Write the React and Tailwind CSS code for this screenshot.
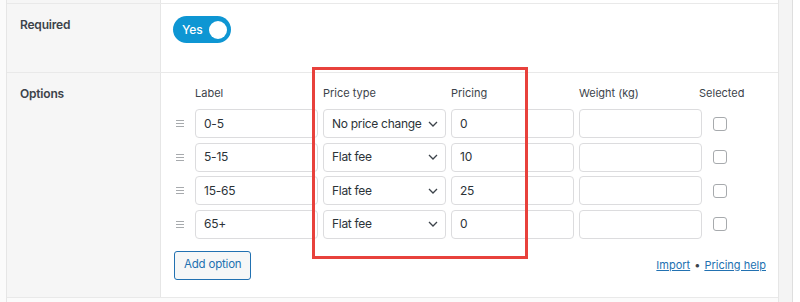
import React from "react";

const rows = [
  { label: "0-5", type: "No price change", price: "0" },
  { label: "5-15", type: "Flat fee", price: "10" },
  { label: "15-65", type: "Flat fee", price: "25" },
  { label: "65+", type: "Flat fee", price: "0" },
];

const Handle = () => (
  <svg width="8" height="7" viewBox="0 0 8 7" className="ml-[2px]">
    <path d="M0 0.5H8M0 3.5H8M0 6.5H8" stroke="#a7aaad" strokeWidth="1" />
  </svg>
);

const Chevron = () => (
  <svg width="10" height="6" viewBox="0 0 10 6" className="shrink-0">
    <path d="M1 1L5 5L9 1" fill="none" stroke="#3c434a" strokeWidth="1.3" />
  </svg>
);

const Field = ({ value }) => (
  <div className="h-[29px] rounded-[4px] border border-[#dcdcde] bg-white pl-[8px] flex items-center text-[12px] tracking-[-0.2px] text-[#2c3338]">
    {value}
  </div>
);

const headCls = "text-[11px] text-[#3c434a] leading-[20px] mb-[1.5px]";

export default function App() {
  return (
    <div
      className="relative w-[800px] h-[302px] overflow-hidden bg-[#fbfbfb] flex"
      style={{ fontFamily: "Inter, 'Noto Sans', sans-serif" }}
    >
      <div className="w-[6px] shrink-0" />

      {/* SETTINGS TABLE */}
      <div className="w-[773px] shrink-0 flex flex-col border-l border-r border-[#e6e6e6]">
        <div className="h-[3px] flex">
          <div className="w-[154px] bg-[#f6f6f6] border-r border-[#e6e6e6]" />
          <div className="flex-1 bg-white" />
        </div>

        {/* REQUIRED */}
        <div className="flex h-[69px] border-t border-[#e9e9e9]">
          <div className="w-[154px] bg-[#f6f6f6] border-r border-[#e6e6e6] pl-[13px] pt-[11px] text-[12px] tracking-[-0.2px] font-semibold text-[#3c434a] leading-[20px]">
            Required
          </div>
          <div className="flex-1 bg-white pl-[12px] pt-[12px]">
            <div className="w-[58px] h-[27px] rounded-full bg-[#0e96d3] flex items-center justify-between pl-[9px] pr-[4px]">
              <span className="text-[12px] font-medium text-white">Yes</span>
              <span className="w-[18px] h-[18px] rounded-full bg-white" />
            </div>
          </div>
        </div>

        {/* OPTIONS */}
        <div className="flex h-[226px] border-t border-b border-[#e9e9e9]">
          <div className="w-[154px] bg-[#f6f6f6] border-r border-[#e6e6e6] pl-[13px] pt-[11px] text-[12px] tracking-[-0.2px] font-semibold text-[#3c434a] leading-[20px]">
            Options
          </div>
          <div className="flex-1 bg-white pl-[13px] pr-[12px] pt-[10px]">
            <div className="grid grid-cols-[16px_123px_123px_123px_123px_40px] gap-x-[5px] gap-y-[4.5px] items-center">
              <div />
              <div className={headCls}>Label</div>
              <div className={headCls}>Price type</div>
              <div className={headCls}>Pricing</div>
              <div className={headCls}>Weight (kg)</div>
              <div className={`${headCls} ml-[-8px] whitespace-nowrap`}>Selected</div>

              {rows.map((r) => (
                <React.Fragment key={r.label}>
                  <Handle />
                  <Field value={r.label} />
                  <div className="h-[29px] rounded-[4px] border border-[#dcdcde] bg-white pl-[8px] pr-[7px] flex items-center justify-between text-[12px] tracking-[-0.3px] text-[#2c3338] whitespace-nowrap">
                    {r.type}
                    <Chevron />
                  </div>
                  <Field value={r.price} />
                  <Field value="" />
                  <div className="flex pl-[6px]">
                    <span className="w-[14px] h-[14px] rounded-[3px] border border-[#a7aaad] bg-white" />
                  </div>
                </React.Fragment>
              ))}
            </div>

            <div className="flex items-center justify-between mt-[12px]">
              <button className="h-[29px] px-[9px] rounded-[3px] border border-[#2271b1] bg-[#f6f7f7] text-[11.5px] tracking-[-0.2px] text-[#2271b1]">
                Add option
              </button>
              <div className="flex items-center gap-[4px] text-[11px] text-[#2271b1]">
                <span className="underline">Import</span>
                <span className="text-[#3c434a]">•</span>
                <span className="underline">Pricing help</span>
              </div>
            </div>
          </div>
        </div>
      </div>

      <div className="w-[14px] shrink-0 bg-[#f4f4f4] border-r border-[#dedede]" />
      <div className="flex-1 bg-white" />

      {/* HIGHLIGHT BOX */}
      <div className="absolute left-[312px] top-[67px] w-[216px] h-[192px] border-[3px] border-[#e8413c]" />
    </div>
  );
}
